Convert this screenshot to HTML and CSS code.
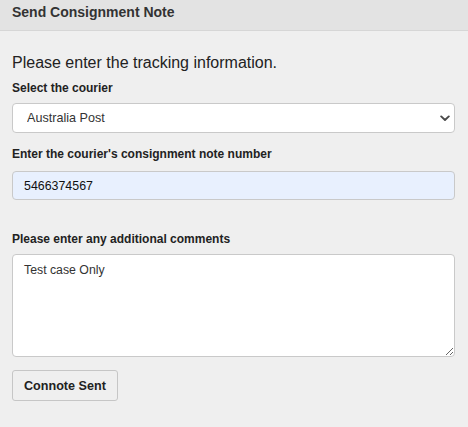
FILE: index.html
```html
<!DOCTYPE html>
<html lang="en">
<head>
<meta charset="utf-8">
<title>Send Consignment Note</title>
<link rel="stylesheet" href="styles.css">
</head>
<body>
<div class="panel">
  <div class="panel-header">Send Consignment Note</div>
  <form class="panel-body">
    <p class="intro">Please enter the tracking information.</p>
    <label class="field-label" for="courier">Select the courier</label>
    <div class="select-wrap">
      <select id="courier" class="select">
        <option>Australia Post</option>
      </select>
      <svg class="chevron" width="10" height="7" viewBox="0 0 10 7" aria-hidden="true">
        <path d="M1.2 1.4 L5 5 L8.8 1.4" fill="none" stroke="#4a4a4a" stroke-width="1.9" stroke-linecap="round" stroke-linejoin="round"/>
      </svg>
    </div>
    <label class="field-label label-gap" for="connote">Enter the courier's consignment note number</label>
    <input id="connote" class="text-input" type="text" value="5466374567">
    <label class="field-label label-gap-lg" for="comments">Please enter any additional comments</label>
    <textarea id="comments" class="textarea">Test case Only</textarea>
    <div class="actions">
      <button type="button" class="btn">Connote Sent</button>
    </div>
  </form>
</div>
</body>
</html>
```

FILE: styles.css
```css
html, body {
  margin: 0;
  padding: 0;
}
body {
  background: #efefef;
  font-family: "Liberation Sans", Arial, sans-serif;
  color: #222;
}
.panel {
  width: 468px;
}
.panel-header {
  box-sizing: border-box;
  height: 31px;
  padding: 3px 12px 0;
  background: #e3e3e3;
  border-bottom: 1px solid #d6d6d6;
  font-size: 14px;
  font-weight: bold;
  line-height: 18px;
  color: #333;
}
.panel-body {
  display: flex;
  flex-direction: column;
  padding: 22px 13px 0 12px;
}
.intro {
  margin: 0;
  font-size: 16px;
  line-height: 20px;
  color: #222;
}
.field-label {
  display: block;
  margin-top: 7px;
  font-size: 12px;
  font-weight: bold;
  line-height: 16px;
  color: #222;
}
.label-gap {
  margin-top: 13px;
}
.label-gap-lg {
  margin-top: 31px;
}
.select-wrap {
  position: relative;
  margin-top: 7px;
}
.select {
  display: block;
  box-sizing: border-box;
  width: 100%;
  height: 30px;
  margin: 0;
  padding: 0 24px 0 14px;
  border: 1px solid #c9c9c9;
  border-radius: 4px;
  background: #fff;
  -webkit-appearance: none;
  appearance: none;
  font-family: "Liberation Sans", Arial, sans-serif;
  font-size: 12.6px;
  color: #333;
}
.chevron {
  position: absolute;
  right: 5px;
  top: 12px;
  pointer-events: none;
}
.text-input {
  display: block;
  box-sizing: border-box;
  width: 100%;
  height: 29px;
  margin: 9px 0 0;
  padding: 0 11px;
  border: 1px solid #c9c9c9;
  border-radius: 4px;
  background: #e8f0fe;
  font-family: "Liberation Sans", Arial, sans-serif;
  font-size: 12.4px;
  color: #111;
  outline: none;
}
.textarea {
  display: block;
  box-sizing: border-box;
  width: 100%;
  height: 103px;
  margin: 7px 0 0;
  padding: 8px 11px;
  border: 1px solid #c9c9c9;
  border-radius: 4px;
  background: #fff;
  font-family: "Liberation Sans", Arial, sans-serif;
  font-size: 12.3px;
  line-height: 14px;
  color: #333;
  outline: none;
}
.actions {
  display: flex;
  margin-top: 13px;
}
.btn {
  box-sizing: border-box;
  height: 31px;
  padding: 0 11px;
  border: 1px solid #c6c6c6;
  border-radius: 3px;
  background: #efefef;
  font-family: "Liberation Sans", Arial, sans-serif;
  font-size: 12.6px;
  font-weight: bold;
  color: #222;
}
```
